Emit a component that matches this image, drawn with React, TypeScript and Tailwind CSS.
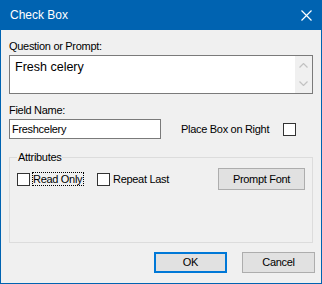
import React from "react";

function Check() {
  return <span className="block w-[13px] h-[13px] border border-[#333333] bg-white shrink-0" />;
}

export default function App() {
  return (
    <div className="w-[322px] h-[284px] bg-[#f0f0f0] border-x border-b border-[#0063b1] text-black overflow-hidden flex flex-col font-['Liberation_Sans',Arial,sans-serif]">
      <div className="h-[30px] bg-[#0063b1] flex items-center justify-between pl-[9px] pr-[9px] shrink-0">
        <span className="text-white text-[12px] leading-[16px]">Check Box</span>
        <svg width="11" height="11" viewBox="0 0 11 11" className="block">
          <path d="M0.5 0.5 L10.5 10.5 M10.5 0.5 L0.5 10.5" stroke="white" strokeWidth="1.2" />
        </svg>
      </div>
      <div className="flex flex-col pl-[8px] text-[11px] tracking-[-0.3px]">
        <div className="mt-[10px] h-[13px] leading-[13px]">Question or Prompt:</div>
        <div className="mt-[2px] w-[304px] h-[39px] border border-[#7a7a7a] bg-white flex">
          <div className="flex-1 pl-[5px] pt-[3px] text-[12.5px] leading-[16px] tracking-[0px]">Fresh celery</div>
          <div className="w-[17px] bg-[#f0f0f0] flex flex-col items-center justify-between py-[7px]">
            <svg width="9" height="5" viewBox="0 0 9 5" className="block">
              <path d="M0.5 4.5 L4.5 0.5 L8.5 4.5" fill="none" stroke="#c2c2c2" strokeWidth="1.2" />
            </svg>
            <svg width="9" height="5" viewBox="0 0 9 5" className="block">
              <path d="M0.5 0.5 L4.5 4.5 L8.5 0.5" fill="none" stroke="#c2c2c2" strokeWidth="1.2" />
            </svg>
          </div>
        </div>
        <div className="mt-[10px] h-[13px] leading-[13px]">Field Name:</div>
        <div className="mt-[2px] h-[20px] flex items-center">
          <div className="w-[152px] h-[20px] border border-[#7a7a7a] bg-white pl-[2px] leading-[18px]">
            Freshcelery
          </div>
          <span className="ml-[20px] w-[102px] leading-[13px]">Place Box on Right</span>
          <Check />
        </div>
        <fieldset className="mt-[11px] w-[304px] h-[93px] border border-[#dcdcdc]">
          <legend className="ml-[7px] px-[1px] leading-[14px]">Attributes</legend>
          <div className="mt-[4px] h-[22px] flex items-center pl-[7px] pr-[7px]">
            <Check />
            <div className="w-[67px] flex">
              <span className="ml-[2px] border border-dotted border-black leading-[12px] pr-[1px]">Read Only</span>
            </div>
            <Check />
            <span className="ml-[3px] leading-[13px]">Repeat Last</span>
            <button className="ml-auto w-[87px] h-[22px] bg-[#e1e1e1] border border-[#adadad] text-[11px] leading-[18px] tracking-[-0.3px]">
              Prompt Font
            </button>
          </div>
        </fieldset>
        <div className="mt-[9px] flex justify-end gap-[15px] pr-[6px]">
          <button className="w-[73px] h-[21px] bg-[#e1e1e1] border-2 border-[#0078d7] text-[11px] leading-[17px] tracking-[-0.3px]">
            OK
          </button>
          <button className="w-[73px] h-[21px] bg-[#e1e1e1] border border-[#adadad] text-[11px] leading-[19px] tracking-[-0.3px]">
            Cancel
          </button>
        </div>
      </div>
    </div>
  );
}
